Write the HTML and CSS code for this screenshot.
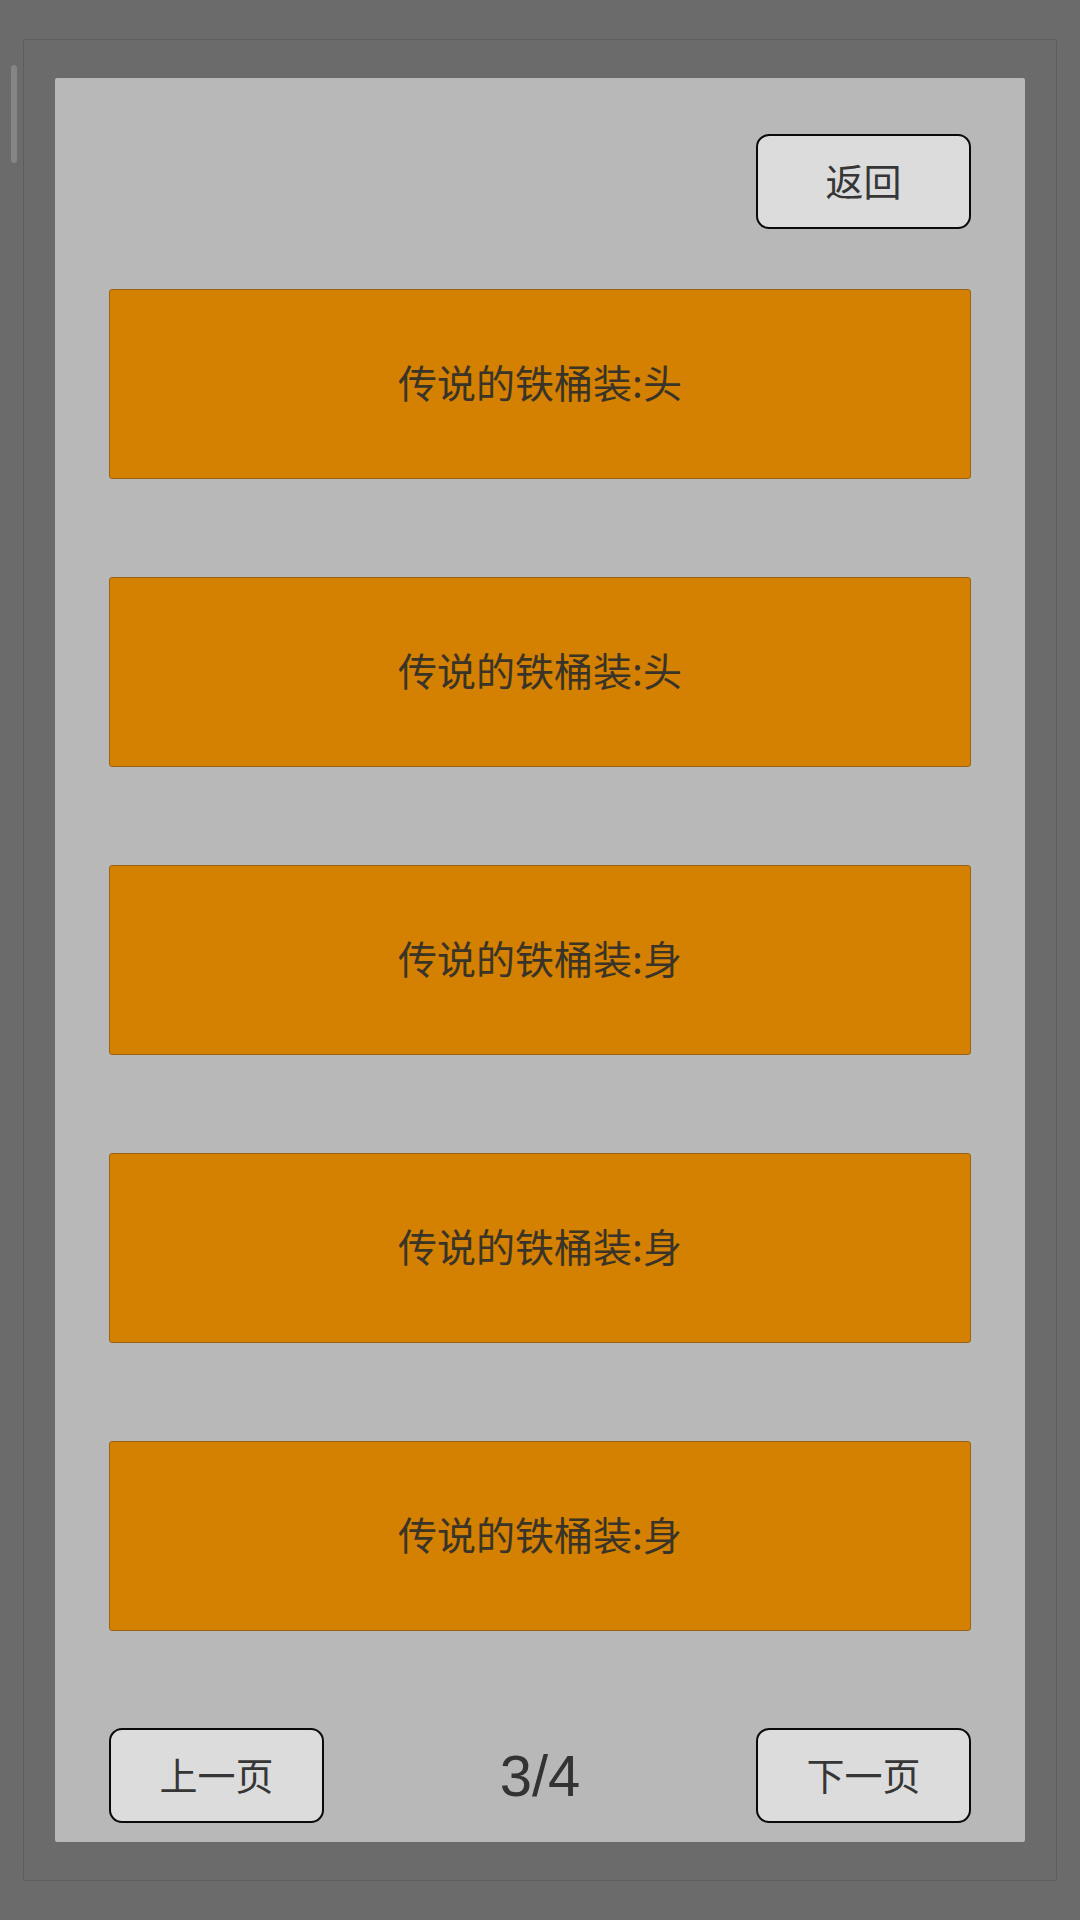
FILE: index.html
```html
<!DOCTYPE html>
<html lang="zh-CN">
<head>
<meta charset="utf-8">
<title>装备列表</title>
<link rel="stylesheet" href="styles.css">
</head>
<body>
<div class="scrollbar"></div>
<div class="frame">
  <div class="panel">
    <div class="top-row">
      <div class="btn">返回</div>
    </div>
    <div class="list">
      <div class="card">传说的铁桶装:头</div>
      <div class="card">传说的铁桶装:头</div>
      <div class="card">传说的铁桶装:身</div>
      <div class="card">传说的铁桶装:身</div>
      <div class="card">传说的铁桶装:身</div>
    </div>
    <div class="bottom-row">
      <div class="btn">上一页</div>
      <div class="page">3/4</div>
      <div class="btn">下一页</div>
    </div>
  </div>
</div>
</body>
</html>
```

FILE: styles.css
```css
html, body {
  margin: 0;
  padding: 0;
}
body {
  width: 1080px;
  height: 1920px;
  background: #6b6b6b;
  position: relative;
  overflow: hidden;
  font-family: "Noto Sans CJK SC", "Noto Sans", sans-serif;
}
.scrollbar {
  position: absolute;
  left: 11px;
  top: 65px;
  width: 6px;
  height: 98px;
  border-radius: 3px;
  background: #858585;
}
.frame {
  box-sizing: border-box;
  margin: 39px 0 0 23px;
  width: 1034px;
  height: 1842px;
  border: 1px solid #5d5d5d;
  border-radius: 2px;
  padding: 38px 31px;
}
.panel {
  box-sizing: border-box;
  width: 970px;
  height: 1764px;
  background: #b8b8b8;
  border-radius: 2px;
  padding: 56px 54px 0 54px;
  display: flex;
  flex-direction: column;
}
.top-row {
  display: flex;
  justify-content: flex-end;
}
.btn {
  box-sizing: border-box;
  width: 215px;
  height: 95px;
  background: #dcdcdc;
  border: 2.5px solid #0a0a0a;
  border-radius: 13px;
  display: flex;
  align-items: center;
  justify-content: center;
  padding-bottom: 4px;
  font-size: 38px;
  color: #363636;
}
.list {
  margin-top: 60px;
  display: flex;
  flex-direction: column;
  gap: 98px;
}
.card {
  box-sizing: border-box;
  height: 190px;
  background: #d48000;
  border: 1px solid #9a6418;
  border-radius: 3px;
  display: flex;
  align-items: center;
  justify-content: center;
  padding-bottom: 6px;
  font-size: 39px;
  color: #3a3428;
}
.bottom-row {
  margin-top: 97px;
  display: flex;
  justify-content: space-between;
  align-items: center;
}
.page {
  font-family: "Liberation Sans", Arial, sans-serif;
  font-size: 58px;
  color: #333333;
}
```
